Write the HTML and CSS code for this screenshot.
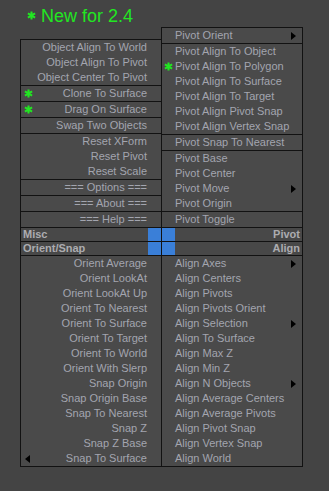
FILE: index.html
```html
<!DOCTYPE html>
<html>
<head>
<meta charset="utf-8">
<link rel="stylesheet" href="styles.css">
</head>
<body>
<div class="title">
  <svg class="star big" viewBox="0 0 10 10"><path d="M5 0.5V9.5M1 2.7L9 7.3M1 7.3L9 2.7"/></svg>
  <span>New for 2.4</span>
</div>
<div class="top">
  <div class="panel left">
    <div class="group">
      <div class="item">Object Align To World</div>
      <div class="item">Object Align To Pivot</div>
      <div class="item">Object Center To Pivot</div>
    </div>
    <div class="group">
      <div class="item"><svg class="star" viewBox="0 0 10 10"><path d="M5 0.5V9.5M1 2.7L9 7.3M1 7.3L9 2.7"/></svg>Clone To Surface</div>
    </div>
    <div class="group">
      <div class="item"><svg class="star" viewBox="0 0 10 10"><path d="M5 0.5V9.5M1 2.7L9 7.3M1 7.3L9 2.7"/></svg>Drag On Surface</div>
    </div>
    <div class="group">
      <div class="item">Swap Two Objects</div>
    </div>
    <div class="group">
      <div class="item">Reset XForm</div>
      <div class="item">Reset Pivot</div>
      <div class="item">Reset Scale</div>
    </div>
    <div class="group">
      <div class="item">=== Options ===</div>
    </div>
    <div class="group">
      <div class="item">=== About ===</div>
    </div>
    <div class="group">
      <div class="item">=== Help ===</div>
    </div>
  </div>
  <div class="panel right">
    <div class="group">
      <div class="item">Pivot Orient<i class="arrow"></i></div>
    </div>
    <div class="group">
      <div class="item">Pivot Align To Object</div>
      <div class="item"><svg class="star" viewBox="0 0 10 10"><path d="M5 0.5V9.5M1 2.7L9 7.3M1 7.3L9 2.7"/></svg>Pivot Align To Polygon</div>
      <div class="item">Pivot Align To Surface</div>
      <div class="item">Pivot Align To Target</div>
      <div class="item">Pivot Align Pivot Snap</div>
      <div class="item">Pivot Align Vertex Snap</div>
    </div>
    <div class="group">
      <div class="item">Pivot Snap To Nearest</div>
    </div>
    <div class="group">
      <div class="item">Pivot Base</div>
      <div class="item">Pivot Center</div>
      <div class="item">Pivot Move<i class="arrow"></i></div>
      <div class="item">Pivot Origin</div>
    </div>
    <div class="group">
      <div class="item">Pivot Toggle</div>
    </div>
  </div>
</div>
<div class="heads">
  <div class="hrow">
    <span class="hl">Misc</span><span class="blue"></span><span class="sep"></span><span class="blue"></span><span class="hr">Pivot</span>
  </div>
  <div class="hrow">
    <span class="hl">Orient/Snap</span><span class="blue"></span><span class="sep"></span><span class="blue"></span><span class="hr">Align</span>
  </div>
</div>
<div class="bottom">
  <div class="panel left">
    <div class="group">
      <div class="item">Orient Average</div>
      <div class="item">Orient LookAt</div>
      <div class="item">Orient LookAt Up</div>
      <div class="item">Orient To Nearest</div>
      <div class="item">Orient To Surface</div>
      <div class="item">Orient To Target</div>
      <div class="item">Orient To World</div>
      <div class="item">Orient With Slerp</div>
      <div class="item">Snap Origin</div>
      <div class="item">Snap Origin Base</div>
      <div class="item">Snap To Nearest</div>
      <div class="item">Snap Z</div>
      <div class="item">Snap Z Base</div>
      <div class="item"><i class="larrow"></i>Snap To Surface</div>
    </div>
  </div>
  <div class="panel right">
    <div class="group">
      <div class="item">Align Axes<i class="arrow"></i></div>
      <div class="item">Align Centers</div>
      <div class="item">Align Pivots</div>
      <div class="item">Align Pivots Orient</div>
      <div class="item">Align Selection<i class="arrow"></i></div>
      <div class="item">Align To Surface</div>
      <div class="item">Align Max Z</div>
      <div class="item">Align Min Z</div>
      <div class="item">Align N Objects<i class="arrow"></i></div>
      <div class="item">Align Average Centers</div>
      <div class="item">Align Average Pivots</div>
      <div class="item">Align Pivot Snap</div>
      <div class="item">Align Vertex Snap</div>
      <div class="item">Align World</div>
    </div>
  </div>
</div>
</body>
</html>
```
FILE: styles.css
```css
html, body {
  margin: 0;
  padding: 0;
  background: #444444;
}
body {
  font-family: "Liberation Sans", Arial, sans-serif;
  font-size: 11px;
  color: #a3a5af;
}
.title {
  height: 27px;
  box-sizing: border-box;
  padding: 4px 0 0 27px;
  display: flex;
  align-items: center;
  line-height: 20px;
  font-size: 18px;
  color: #22e622;
}
.title span {
  margin-left: 5px;
  height: 20px;
}
.star {
  width: 9px;
  height: 9px;
  fill: none;
  stroke: #22e622;
  stroke-width: 2.3;
}
.star.big {
  width: 9px;
  height: 9px;
  margin-top: -1px;
}
.top, .bottom {
  display: flex;
  align-items: flex-end;
  margin-left: 20px;
  width: 283px;
}
.panel {
  width: 142px;
  box-sizing: border-box;
  background: #4a4a4a;
  border: 1px solid #121212;
  border-bottom: none;
}
.bottom .panel {
  border-top: none;
  border-bottom: 1px solid #121212;
}
.panel.right {
  margin-left: -1px;
}
.group + .group {
  border-top: 1px solid #121212;
}
.item {
  position: relative;
  height: 15px;
  line-height: 15px;
  white-space: nowrap;
}
.left .item {
  text-align: right;
  padding-right: 14px;
}
.right .item {
  padding-left: 13px;
}
.item .star {
  position: absolute;
  top: 3px;
}
.left .item .star {
  left: 3px;
}
.right .item .star {
  left: 2px;
}
.arrow {
  position: absolute;
  right: 6px;
  top: 4px;
  width: 0;
  height: 0;
  border-left: 5px solid #000;
  border-top: 4px solid transparent;
  border-bottom: 4px solid transparent;
}
.larrow {
  position: absolute;
  left: 4px;
  top: 4px;
  width: 0;
  height: 0;
  border-right: 5px solid #000;
  border-top: 4px solid transparent;
  border-bottom: 4px solid transparent;
}
.heads {
  margin-left: 20px;
  width: 283px;
  box-sizing: border-box;
  border: 1px solid #121212;
  background: #484848;
}
.hrow {
  display: flex;
  height: 13px;
  line-height: 13px;
  font-weight: bold;
  color: #acacb0;
}
.hrow + .hrow {
  border-top: 1px solid #121212;
}
.hl, .hr {
  flex: 1;
  padding: 0 2px;
}
.hr {
  text-align: right;
}
.blue {
  width: 13px;
  background: #3a7fd8;
}
.sep {
  width: 1px;
  background: #121212;
}
```
